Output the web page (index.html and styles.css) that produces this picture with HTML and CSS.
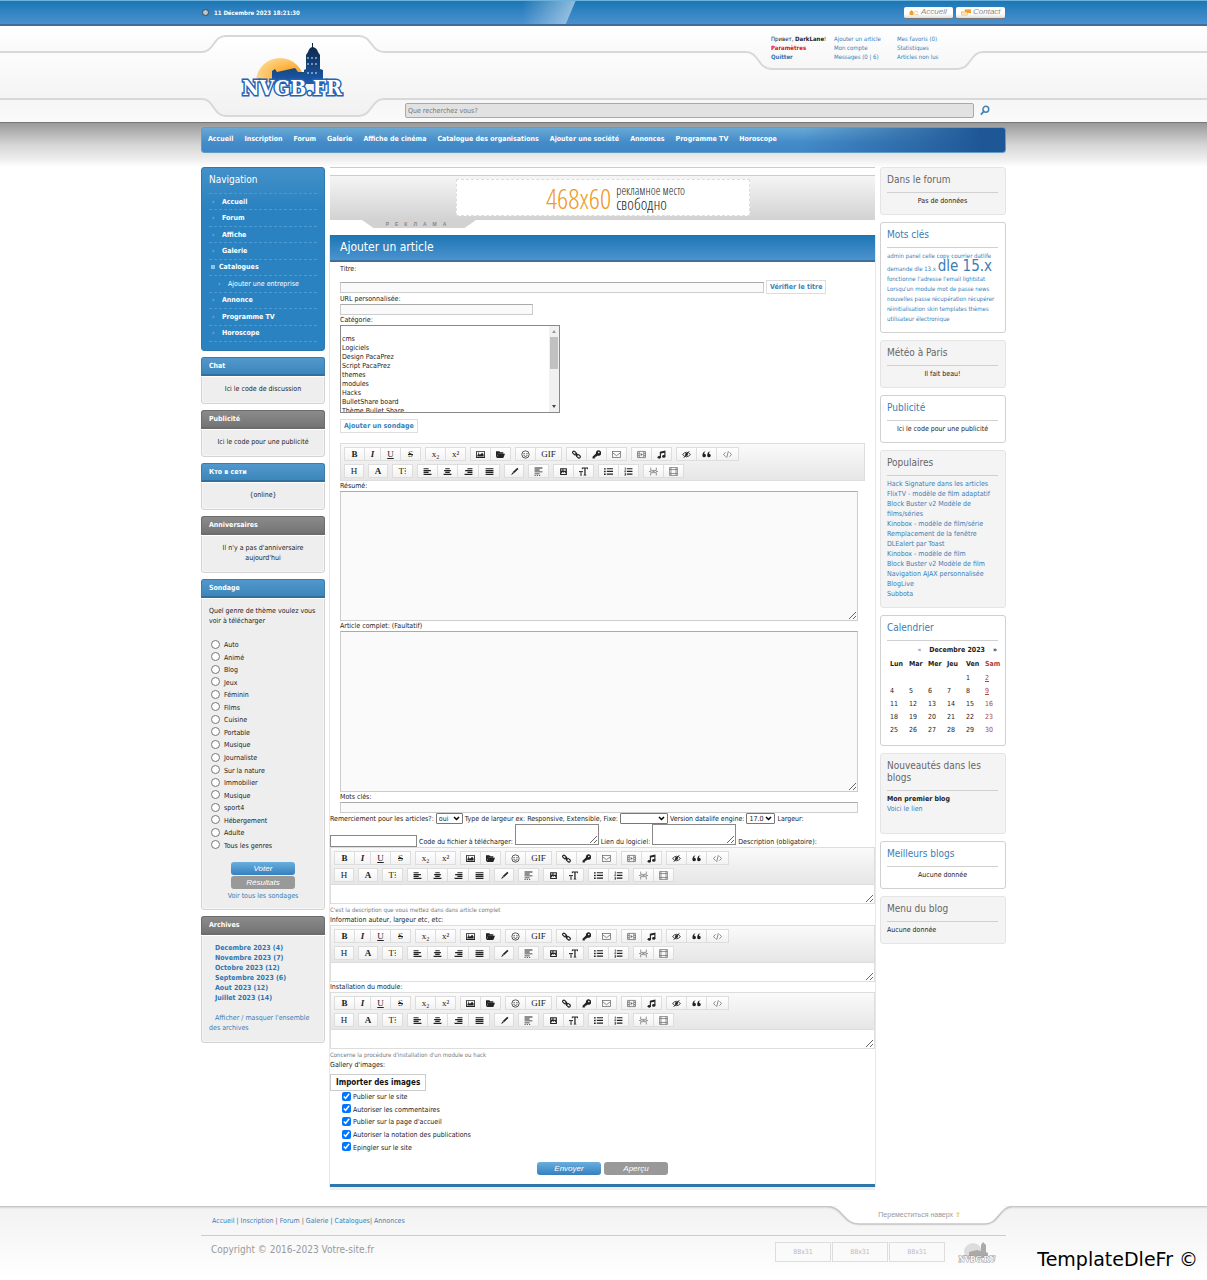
FILE: index.html
```html
<!DOCTYPE html>
<html lang="fr">
<head>
<meta charset="utf-8">
<meta name="viewport" content="width=device-width, initial-scale=1">
<title>Ajouter un article</title>
<link rel="stylesheet" href="styles.css">
</head>
<body>
<svg class="sprite" aria-hidden="true">
  <symbol id="i-image" viewBox="0 0 16 16"><path fill-rule="evenodd" d="M0 2h16v12H0zM1.500 3.500v9h13v-9z"/><path d="M2.500 11.500V9l2.500-2.500 2 2L11 5l2.500 3v3.500z"/><circle cx="4.500" cy="5.500" r="1.200"/></symbol>
  <symbol id="i-folder" viewBox="0 0 16 16"><path d="M0 13V2h6l1.500 2H13v2.500H4L1 13z"/><path d="M1 14l3-7.500h12L13 14z"/></symbol>
  <symbol id="i-smile" viewBox="0 0 16 16"><circle cx="8" cy="8" r="6.500" fill="none" stroke="currentColor" stroke-width="1.300"/><circle cx="5.500" cy="6.500" r="1"/><circle cx="10.500" cy="6.500" r="1"/><path d="M4.500 9.500q3.500 4 7 0" fill="none" stroke="currentColor" stroke-width="1.300"/></symbol>
  <symbol id="i-link" viewBox="0 0 16 16"><g fill="none" stroke="currentColor" stroke-width="2"><rect x="1" y="3" width="7.500" height="4.500" rx="2.200" transform="rotate(40 4.500 5)"/><rect x="7.500" y="8.500" width="7.500" height="4.500" rx="2.200" transform="rotate(40 11 11)"/><path d="M6 6l4 4"/></g></symbol>
  <symbol id="i-key" viewBox="0 0 16 16"><path fill-rule="evenodd" d="M10.500 0.500a5 5 0 1 1-1 9.500L8 11.500H6.500V13H5v2H1v-3l6-6a5 5 0 0 1 3.500-5.500zM12 3a1.300 1.300 0 1 0 .1 0z"/></symbol>
  <symbol id="i-mail" viewBox="0 0 16 16"><g fill="none" stroke="currentColor" stroke-width="1.300"><rect x="1" y="2.500" width="14" height="11"/><path d="M1 5l7 5 7-5"/></g></symbol>
  <symbol id="i-film" viewBox="0 0 16 16"><path d="M1 2.500h14v11H1zM4 3v10M12 3v10M1 6h3M1 10h3M12 6h3M12 10h3" fill="none" stroke="currentColor" stroke-width="1.300"/><path d="M6.500 5.500l4 2.500-4 2.500z"/></symbol>
  <symbol id="i-music" viewBox="0 0 16 16"><path d="M5 3l10-2v3.500L7 6v7H5z"/><path d="M13 4h2v7h-2z"/><ellipse cx="4" cy="13" rx="3" ry="2.400"/><ellipse cx="12" cy="11.500" rx="3" ry="2.400"/></symbol>
  <symbol id="i-eye" viewBox="0 0 16 16"><path d="M1 8q7-8 14 0-7 8-14 0z" fill="none" stroke="currentColor" stroke-width="1.500"/><circle cx="8" cy="8" r="2.500"/><path d="M3 14L13 2" stroke="currentColor" stroke-width="1.500"/></symbol>
  <symbol id="i-quote" viewBox="0 0 16 16"><path d="M7 2.500C4.500 3 4 5 4 6.500a3.200 3.200 0 1 1-3.300 3.500C.7 6 2.500 2 7 2.500zM15.500 2.500c-2.500.5-3 2.500-3 4A3.200 3.200 0 1 1 9.200 10C9.200 6 11 2 15.500 2.500z"/></symbol>
  <symbol id="i-code" viewBox="0 0 16 16"><path d="M4.500 4L1 8l3.500 4M11.500 4L15 8l-3.500 4M9.500 2l-3 12" fill="none" stroke="currentColor" stroke-width="1.300"/></symbol>
  <symbol id="i-left" viewBox="0 0 16 16"><path d="M1 2h9v2.200H1zM1 5.300h13v2.200H1zM1 8.600h9v2.200H1zM1 11.900h14v2.200H1z"/></symbol>
  <symbol id="i-center" viewBox="0 0 16 16"><path d="M4 2h8v2.200H4zM2 5.300h12v2.200H2zM4 8.600h8v2.200H4zM1 11.900h14v2.200H1z"/></symbol>
  <symbol id="i-right" viewBox="0 0 16 16"><path d="M6 2h9v2.200H6zM2 5.300h13v2.200H2zM6 8.600h9v2.200H6zM1 11.900h14v2.200H1z"/></symbol>
  <symbol id="i-justify" viewBox="0 0 16 16"><path d="M1 2h14v2.200H1zM1 5.300h14v2.200H1zM1 8.600h14v2.200H1zM1 11.900h14v2.200H1z"/></symbol>
  <symbol id="i-pen" viewBox="0 0 16 16"><path d="M13 1.500l2 2L7 11 5 9zM4.500 9.500l2 2-4.500 3z"/></symbol>
  <symbol id="i-para" viewBox="0 0 16 16"><path d="M1 1h14v1.500H1zM1 4.500h9V6H1zM1 8h14v1.500H1zM1 11.500h9V13H1zM1 14.500h2V16H1zM5 14.500h2V16H5zM9 14.500h2V16H9z"/></symbol>
  <symbol id="i-card" viewBox="0 0 16 16"><path fill-rule="evenodd" d="M2 2h12v12H2zM4 4v2.500h2V4zM8 4v2.500h4V4zM4 11v1.500h8V11L9.500 8.500 8 10 6.500 9z"/></symbol>
  <symbol id="i-size" viewBox="0 0 16 16"><path d="M5 1h11v3h-1l-.7-1.300H11.700V13.500l1.300.5v1H8.300v-1l1.200-.5V2.700H7L6 4H5zM0 7h7v2.200h-.8L5.700 8.300H4.400v5.500l.8.300V15H2v-.9l.7-.3V8.300H1.400L.9 9.200H0z"/></symbol>
  <symbol id="i-ul" viewBox="0 0 16 16"><path d="M0 2h3v2.500H0zM5 2h11v2.200H5zM0 6.800h3v2.500H0zM5 6.800h11V9H5zM0 11.500h3V14H0zM5 11.500h11v2.200H5z"/></symbol>
  <symbol id="i-ol" viewBox="0 0 16 16"><path d="M5 2h10v2.200H5zM5 6.800h10V9H5zM5 11.500h10v2.200H5zM1.500 1h1.300v4H1.500zM1 6h2.500v1H2v1h1.500v1.500H1zM1 11h2.500v4H1v-1h1.500v-.5H1v-1h1.500V12H1z"/></symbol>
  <symbol id="i-break" viewBox="0 0 16 16"><path d="M3 1v5h10V1M3 15v-5h10v5M0 8h4M6 8h4M12 8h4" fill="none" stroke="currentColor" stroke-width="1.200"/></symbol>
  <symbol id="i-page" viewBox="0 0 16 16"><path d="M1 1h14v14H1zM1 4.500h14M1 11.500h14M3.500 1v14M12.500 1v14" fill="none" stroke="currentColor" stroke-width="1.200"/></symbol>
</svg>

<div class="topbar">
  <div class="wrap topbar-in">
    <span class="clock"></span>
    <time datetime="2023-12-11T18:21:30">11 Décembre 2023 18:21:30</time>
    <svg class="shine" viewBox="0 0 60 26" aria-hidden="true"><defs><linearGradient id="sh"><stop offset="0" stop-color="#fff" stop-opacity="0"/><stop offset="1" stop-color="#fff" stop-opacity=".5"/></linearGradient></defs><path d="M0 0h60L49 26H0z" fill="url(#sh)"/></svg>
    <a class="pill" href="#"><svg viewBox="0 0 16 10" aria-hidden="true"><path d="M0 5l4-4 4 4H7v4H1V5z" fill="#f0a030"/><path d="M8 8V5l3-3 4 4M10 8.500h5" stroke="#f0b860" stroke-width="1.200" fill="none"/></svg>Accueil</a>
    <a class="pill" href="#"><svg viewBox="0 0 16 10" aria-hidden="true"><path d="M6 0h10v6H6z" fill="#f0a030"/><path d="M1 4h9v5H1z" fill="#fff" stroke="#f0a030"/><path d="M1 4l4.500 3L10 4" fill="none" stroke="#f0a030"/></svg>Contact</a>
  </div>
</div>

<header class="head">
  <svg class="frame" viewBox="0 0 2414 96" aria-hidden="true">
    <defs><linearGradient id="fg" x2="0" y2="1"><stop offset="0" stop-color="#fff"/><stop offset="1" stop-color="#f1f1f1"/></linearGradient></defs>
    <g fill="url(#fg)" stroke="#d6d8d9" stroke-width="2">
      <path d="M-5 26H805C817 26 816 10 829 10H962C975 10 974 26 987 26H1349C1362 26 1361 43 1374 43H1561C1574 43 1573 26 1586 26H2420V73H987C974 73 975 90 962 90H829C816 90 817 73 805 73H-5z"/>
    </g>
  </svg>
  <div class="wrap head-in">
    <a class="logo" href="#" aria-label="NVGB.FR">
      <svg viewBox="0 0 104 60" width="104" height="60">
        <defs><radialGradient id="sun" cx=".8" cy=".7" r=".8"><stop offset="0" stop-color="#ff9800"/><stop offset="1" stop-color="#fcd48a"/></radialGradient><linearGradient id="twr" x2="0" y2="1"><stop offset="0" stop-color="#0b2440"/><stop offset="1" stop-color="#1d5cb0"/></linearGradient></defs>
        <path d="M16 40a24 24 0 1 1 48 0z" fill="url(#sun)"/>
        <path d="M32 42V29l3-2 2 3 18-4 3 4h6V28l2-1V13l2-3q1-4 4-5V1h1v4q4 1 5 5l2 3v14l3 1v14z" fill="url(#twr)"/>
        <path d="M68 15v2m4-2v2m4-2v2M68 21v2m4-2v2m4-2v2M68 30v2m4-2v2m4-2v2" stroke="#d8e6f5"/>
        <text x="52" y="53" text-anchor="middle" class="logo-text">NVGB.FR</text>
      </svg>
    </a>
    <div class="head-main">
      <nav class="user" aria-label="Compte">
        <span class="hello">Привет, <b>DarkLane</b>!</span><a href="#">Ajouter un article</a><a href="#">Mes favoris (0)</a>
        <a class="red" href="#">Paramètres</a><a href="#">Mon compte</a><a href="#">Statistiques</a>
        <a class="strong" href="#">Quitter</a><a href="#">Messages (0 | 6)</a><a href="#">Articles non lus</a>
      </nav>
      <form class="search">
        <input type="text" aria-label="Recherche" placeholder="Que recherchez vous?">
        <button type="button" aria-label="Rechercher"><svg viewBox="0 0 12 12" aria-hidden="true"><circle cx="7" cy="4.500" r="3.500" fill="none" stroke="#3f83bd" stroke-width="1.800"/><path d="M4.500 7L1 11" stroke="#3f83bd" stroke-width="2"/></svg></button>
      </form>
    </div>
  </div>
</header>

<div class="menuband">
  <nav class="wrap menu" aria-label="Menu principal">
    <a href="#">Accueil</a><a href="#">Inscription</a><a href="#">Forum</a><a href="#">Galerie</a><a href="#">Affiche de cinéma</a><a href="#">Catalogue des organisations</a><a href="#">Ajouter une société</a><a href="#">Annonces</a><a href="#">Programme TV</a><a href="#">Horoscope</a>
  </nav>
</div>

<div class="wrap columns">
  <aside class="left">
    <nav class="sidenav" aria-label="Navigation">
      <h2>Navigation</h2>
      <ul>
        <li><a href="#">Accueil</a></li><li><a href="#">Forum</a></li><li><a href="#">Affiche</a></li><li><a href="#">Galerie</a></li>
        <li class="open"><a href="#">Catalogues</a></li><li class="sub"><a href="#">Ajouter une entreprise</a></li>
        <li><a href="#">Annonce</a></li><li><a href="#">Programme TV</a></li><li><a href="#">Horoscope</a></li>
      </ul>
    </nav>
    <section class="block"><h3>Chat</h3><p>Ici le code de discussion</p></section>
    <section class="block grey"><h3>Publicité</h3><p>Ici le code pour une publicité</p></section>
    <section class="block"><h3>Кто в сети</h3><p>{online}</p></section>
    <section class="block grey"><h3>Anniversaires</h3><p>Il n'y a pas d'anniversaire aujourd'hui</p></section>
    <section class="block"><h3>Sondage</h3>
      <form class="poll">
        <div class="question">Quel genre de thème voulez vous voir à télécharger</div>
        <div class="choices">
          <label><input type="radio" name="v">Auto</label><label><input type="radio" name="v">Animé</label><label><input type="radio" name="v">Blog</label><label><input type="radio" name="v">Jeux</label><label><input type="radio" name="v">Féminin</label><label><input type="radio" name="v">Films</label><label><input type="radio" name="v">Cuisine</label><label><input type="radio" name="v">Portable</label><label><input type="radio" name="v">Musique</label><label><input type="radio" name="v">Journaliste</label><label><input type="radio" name="v">Sur la nature</label><label><input type="radio" name="v">Immobilier</label><label><input type="radio" name="v">Musique</label><label><input type="radio" name="v">sport4</label><label><input type="radio" name="v">Hébergement</label><label><input type="radio" name="v">Adulte</label><label><input type="radio" name="v">Tous les genres</label>
        </div>
        <div class="poll-actions"><button class="btn" type="button">Voter</button><button class="btn dull" type="button">Résultats</button><a href="#">Voir tous les sondages</a></div>
      </form>
    </section>
    <section class="block grey"><h3>Archives</h3>
      <div class="archive">
        <a href="#">Decembre 2023 (4)</a><a href="#">Novembre 2023 (7)</a><a href="#">Octobre 2023 (12)</a><a href="#">Septembre 2023 (6)</a><a href="#">Aout 2023 (12)</a><a href="#">Juillet 2023 (14)</a>
        <a class="all" href="#">Afficher / masquer l'ensemble des archives</a>
      </div>
    </section>
  </aside>

  <main>
    <div class="promo">
      <div class="promo-band"><a class="ad" href="#"><span class="ad-size">468x60</span><span class="ad-text"><span>рекламное место</span><span class="ad-free">свободно</span></span></a></div>
      <div class="promo-tab"><span>РЕКЛАМА</span></div>
    </div>
    <form class="article">
      <h1>Ajouter un article</h1>
      <div class="inset">
        <label for="titre">Titre:</label>
        <div class="row title-row"><input class="field" id="titre" type="text"><button class="mini" type="button">Vérifier le titre</button></div>
        <label for="url">URL personnalisée:</label>
        <input class="field url" id="url" type="text">
        <label for="cat">Catégorie:</label>
        <div class="cat-box">
          <select id="cat" class="cat" multiple><option></option><option>cms</option><option>Logiciels</option><option>Design PacaPrez</option><option>Script PacaPrez</option><option>themes</option><option>modules</option><option>Hacks</option><option>BulletShare board</option><option>Thème Bullet Share</option></select>
          <svg class="cat-bar" viewBox="0 0 10 86" aria-hidden="true"><path d="M0 0h10v86H0z" fill="#f1f1f1"/><path d="M1 11h8v32H1z" fill="#c1c1c1"/><path d="M3 7l2-3 2 3z" fill="#999"/><path d="M3 79l2 3 2-3z" fill="#444"/></svg>
        </div>
        <button class="mini poll-add" type="button">Ajouter un sondage</button>
        <div class="toolbar"></div>
        <label for="resume">Résumé:</label>
        <textarea class="field resume" id="resume"></textarea>
        <label for="complet">Article complet: (Faultatif)</label>
        <textarea class="field complet" id="complet"></textarea>
        <label for="mots">Mots clés:</label>
        <input class="field words" id="mots" type="text">
      </div>
      <div class="line"><label for="merci">Remerciement pour les articles?:</label><select id="merci" class="w-yes"><option>oui</option></select><label for="type">Type de largeur ex: Responsive, Extensible, Fixe:</label><select id="type" class="w-type"><option></option></select><label for="ver">Version datalife engine:</label><select id="ver" class="w-ver"><option>17.0</option></select><label for="larg">Largeur:</label></div>
      <div class="line low"><input id="larg" type="text"><label for="code">Code du fichier à télécharger:</label><textarea id="code"></textarea><label for="lien">Lien du logiciel:</label><textarea id="lien"></textarea><label for="desc">Description (obligatoire):</label></div>
      <div class="toolbar"></div><textarea class="short" id="desc"></textarea>
      <small>C'est la description que vous mettez dans dans article complet</small>
      <label for="info">Information auteur, largeur etc, etc:</label>
      <div class="toolbar"></div><textarea class="short" id="info"></textarea>
      <label for="inst">Installation du module:</label>
      <div class="toolbar"></div><textarea class="short" id="inst"></textarea>
      <small>Concerne la procédure d'installation d'un module ou hack</small>
      <span class="text">Gallery d'images:</span>
      <button class="import" type="button">Importer des images</button>
      <div class="checks">
        <label><input type="checkbox" checked>Publier sur le site</label><label><input type="checkbox" checked>Autoriser les commentaires</label><label><input type="checkbox" checked>Publier sur la page d'accueil</label><label><input type="checkbox" checked>Autoriser la notation des publications</label><label><input type="checkbox" checked>Epingler sur le site</label>
      </div>
      <div class="submit"><button class="btn" type="button">Envoyer</button><button class="btn dull" type="button">Aperçu</button></div>
    </form>
  </main>

  <aside class="right">
    <section class="card tint"><h2>Dans le forum</h2><p>Pas de données</p></section>
    <section class="card"><h2>Mots clés</h2><div class="tags"><a href="#">admin panel</a> <a href="#">celle</a> <a href="#">copy</a> <a href="#">courrier</a> <a href="#">datlife</a> <br><a href="#">demande</a> <a href="#">dle 13.x</a> <a class="big" href="#">dle 15.x</a> <br><a href="#">fonctionne</a> <a href="#">l'adresse</a> <a href="#">l'email</a> <a href="#">lightstat</a> <br><a href="#">Lorsqu'un</a> <a href="#">module</a> <a href="#">mot de passe</a> <a href="#">news</a> <br><a href="#">nouvelles</a> <a href="#">passe</a> <a href="#">récupération</a> <a href="#">récupérer</a> <br><a href="#">réinitialisation</a> <a href="#">skin</a> <a href="#">templates</a> <a href="#">thèmes</a> <br><a href="#">utilisateur</a> <a href="#">électronique</a></div></section>
    <section class="card tint"><h2>Météo à Paris</h2><p>Il fait beau!</p></section>
    <section class="card"><h2>Publicité</h2><p>Ici le code pour une publicité</p></section>
    <section class="card tint"><h2>Populaires</h2><div class="list"><a href="#">Hack Signature dans les articles</a><a href="#">FlixTV - modèle de film adaptatif</a><a href="#">Block Buster v2 Modèle de films/séries</a><a href="#">Kinobox - modèle de film/série</a><a href="#">Remplacement de la fenêtre</a><a href="#">DLEalert par Toast</a><a href="#">Kinobox - modèle de film</a><a href="#">Block Buster v2 Modèle de film</a><a href="#">Navigation AJAX personnalisée</a><a href="#">BlogLive</a><a href="#">Subbota</a></div></section>
    <section class="card"><h2>Calendrier</h2>
      <table class="cal">
        <caption><a href="#">«</a><b>Decembre 2023</b><b>»</b></caption>
        <thead><tr><th>Lun</th><th>Mar</th><th>Mer</th><th>Jeu</th><th>Ven</th><th>Sam</th></tr></thead>
        <tbody>
          <tr><td></td><td></td><td></td><td></td><td>1</td><td><a href="#">2</a></td></tr>
          <tr><td>4</td><td>5</td><td>6</td><td>7</td><td>8</td><td><a href="#">9</a></td></tr>
          <tr><td>11</td><td>12</td><td>13</td><td>14</td><td>15</td><td>16</td></tr>
          <tr><td>18</td><td>19</td><td>20</td><td>21</td><td>22</td><td>23</td></tr>
          <tr><td>25</td><td>26</td><td>27</td><td>28</td><td>29</td><td>30</td></tr>
        </tbody>
      </table>
    </section>
    <section class="card tint blogs"><h2>Nouveautés dans les blogs</h2><div class="list"><b>Mon premier blog</b><a href="#">Voici le lien</a></div></section>
    <section class="card"><h2>Meilleurs blogs</h2><p>Aucune donnée</p></section>
    <section class="card tint"><h2>Menu du blog</h2><div class="list">Aucune donnée</div></section>
  </aside>
</div>

<footer class="foot">
  <svg class="foot-frame" viewBox="0 0 2414 20" aria-hidden="true"><path d="M0 0H1430C1446 0 1446 17 1462 17H1588C1602 17 1602 0 1616 0H2414" fill="#fff" stroke="#e6e6e6" stroke-width="5"/><path d="M0 0.500H1430C1446 0.500 1446 18 1462 18H1588C1602 18 1602 0.500 1616 0.500H2414" fill="#fff" stroke="#c6c6c6" stroke-width="1.500"/></svg>
  <div class="wrap">
    <div class="foot-top">
      <nav aria-label="Pied de page"><a href="#">Accueil</a> | <a href="#">Inscription</a> | <a href="#">Forum</a> | <a href="#">Galerie</a> | <a href="#">Catalogues</a>| <a href="#">Annonces</a></nav>
      <a class="up" href="#">Переместиться наверх <i>⇧</i></a>
    </div>
    <div class="foot-low">
      <span class="copy">Copyright © 2016-2023 Votre-site.fr</span>
      <span class="count">88x31</span><span class="count">88x31</span><span class="count">88x31</span>
      <svg class="mark" viewBox="0 0 38 22" aria-hidden="true"><circle cx="15" cy="10" r="9" fill="#ddd"/><path d="M11 15V10l8-2 4 1V3l2-3 3 3v7l2 1v5H11z" fill="#aaa"/><text x="19" y="20" text-anchor="middle" class="mark-text">NVBG.RU</text></svg>
    </div>
  </div>
  <div class="stamp">TemplateDleFr ©</div>
</footer>

<template id="editor-tools">
  <div class="tools">
    <div class="group"><button type="button"><b>B</b></button><button type="button" class="n16"><b><i>I</i></b></button><button type="button"><u>U</u></button><button type="button"><s>S</s></button></div>
    <div class="group"><button type="button">x₂</button><button type="button">x²</button></div>
    <div class="group"><button type="button" data-icon="image"></button><button type="button" data-icon="folder"></button></div>
    <div class="group"><button type="button" data-icon="smile"></button><button type="button" class="n26">GIF</button></div>
    <div class="group"><button type="button" data-icon="link"></button><button type="button" data-icon="key"></button><button type="button" class="soft" data-icon="mail"></button></div>
    <div class="group"><button type="button" class="soft" data-icon="film"></button><button type="button" data-icon="music"></button></div>
    <div class="group"><button type="button" data-icon="eye"></button><button type="button" data-icon="quote"></button><button type="button" class="n22 soft" data-icon="code"></button></div>
  </div>
  <div class="tools">
    <div class="group"><button type="button">H</button></div>
    <div class="group"><button type="button"><b>A</b></button></div>
    <div class="group"><button type="button" class="n19">T⁞</button></div>
    <div class="group"><button type="button" data-icon="left"></button><button type="button" data-icon="center"></button><button type="button" class="n21" data-icon="right"></button><button type="button" class="n21" data-icon="justify"></button></div>
    <div class="group"><button type="button" data-icon="pen"></button></div>
    <div class="group"><button type="button" class="n19" data-icon="para"></button></div>
    <div class="group"><button type="button" data-icon="card"></button><button type="button" data-icon="size"></button></div>
    <div class="group"><button type="button" data-icon="ul"></button><button type="button" data-icon="ol"></button></div>
    <div class="group"><button type="button" class="soft" data-icon="break"></button><button type="button" class="soft" data-icon="page"></button></div>
  </div>
</template>
<script src="script.js"></script>
</body>
</html>
```

FILE: styles.css
```css
* { box-sizing: border-box; }
body { margin: 0; background: #fff; color: #222; font: 7px/10px "DejaVu Sans Condensed", "Noto Sans", sans-serif; }
a { color: #3b7db5; text-decoration: none; }
h1, h2, h3, p, ul { margin: 0; padding: 0; font-weight: normal; }
ul { list-style: none; }
input, select, textarea, button { font: inherit; color: inherit; margin: 0; padding: 0; }
.sprite { display: none; }
.wrap { width: 100%; max-width: 805px; margin: 0 auto; }

/* top bar */
.topbar { background: linear-gradient(#1c77b5, #4a91cf); border-top: 1px solid #6db2dc; border-bottom: 2px solid #426d9a; }
.topbar-in { display: flex; align-items: center; height: 23px; padding-right: 1px; gap: 3px; color: #fff; font-weight: bold; position: relative; }
.topbar-in time { margin: 0 auto 0 2px; font-size: 6px; }
.clock { width: 7px; height: 7px; margin-left: 1px; border: 1px solid #444; border-radius: 50%; background: #b8c6cf; }
.shine { position: absolute; left: 318px; top: 0; width: 60px; height: 23px; }
.pill { display: flex; align-items: center; gap: 2px; height: 12px; width: 49px; padding-left: 5px; border-radius: 2px; background: linear-gradient(#fff 60%, #ddd); border-bottom: 1px solid #777; color: #8a8a8a; font: italic 8px/12px "Liberation Sans", sans-serif; }
.pill svg { width: 10px; height: 7px; }

/* header */
.head { position: relative; overflow: hidden; background: linear-gradient(#fff, #f3f3f3 60%, #fafafa); }
.frame { position: absolute; left: 50%; top: 0; width: 2414px; height: 96px; margin-left: -1207px; }
.head-in { position: relative; display: flex; height: 96px; }
.logo { flex: none; width: 204px; padding: 16px 0 0 39px; }
.logo-text { font: bold 21px "DejaVu Serif Condensed", "DejaVu Serif", serif; fill: #fff; stroke: #2263b5; stroke-width: 3px; paint-order: stroke; }
.head-main { flex: 1; display: flex; flex-direction: column; justify-content: space-between; }
.user { display: grid; grid-template-columns: 63px 63px 1fr; margin-left: 366px; padding-top: 8px; font-size: 6px; line-height: 9px; white-space: nowrap; }
.user .red { color: #e01010; font-weight: bold; }
.user .strong { color: #2b74b5; font-weight: bold; }
.search { display: flex; align-items: center; gap: 6px; padding-bottom: 4px; }
.search input { width: 569px; height: 15px; padding: 0 2px; border: 1px solid #a9a9a9; border-radius: 2px; background: #e2e2e2; }
.search input::placeholder { color: #777; }
.search button { width: 10px; height: 12px; border: 0; background: none; }
.search svg { display: block; width: 10px; height: 11px; }

/* main menu */
.menuband { padding: 4px 0 14px; border-top: 1px solid #777; background: linear-gradient(#999, #d6d6d6 50%, #ececec 80%, #fff); }
.menu { display: flex; gap: 11px; height: 26px; padding: 0 6px; line-height: 23px; border: 1px solid #5f9cc9; border-radius: 3px; background: linear-gradient(90deg, transparent 75%, #1f5796 97%), linear-gradient(#68a8d4, #448bc9 60%, #3f86c5); white-space: nowrap; }
.menu a { color: #fff; font-weight: bold; }

.columns { display: grid; grid-template-columns: 124px minmax(0, 1fr) 126px; column-gap: 5px; align-items: start; }
.left, .right { display: flex; flex-direction: column; }
.left { gap: 6px; }
.right { gap: 7px; }

/* left column */
.sidenav { height: 184px; padding: 6px 7px; border-radius: 3px; background: linear-gradient(#4390c8, #2a82c0 40px); border: 1px solid #2b79b2; color: #fff; }
.sidenav h2 { font-size: 10px; line-height: 12px; padding: 0 0 7px; border-bottom: 1px dashed #4c9ad2; }
.sidenav ul { display: grid; grid-auto-rows: 1fr; height: 148px; }
.sidenav li { display: flex; align-items: center; border-bottom: 1px dashed #4c9ad2; }
.sidenav li::before { content: "›"; width: 10px; padding-left: 3px; color: #9ccbee; }
.sidenav .open::before { content: ""; width: 4px; height: 4px; margin: 0 4px 0 2px; padding: 0; background: #8cc4ea; }
.sidenav .sub { padding-left: 6px; }
.sidenav a { color: #fff; font-weight: bold; }
.sidenav .sub a { font-weight: normal; }
.block { border: 1px solid #d3d3d3; border-radius: 3px; background: #eee; box-shadow: inset 0 0 0 1px #f5f5f5; }
.block h3 { margin: -1px; padding: 0 7px; height: 19px; font-size: 7px; line-height: 16px; color: #fff; font-weight: bold; border: 1px solid #3b7cab; border-bottom: 2px solid #336f9c; border-radius: 3px 3px 0 0; background: linear-gradient(#5298cc, #3c86bb); box-shadow: 0 1px #fff; }
.block.grey h3 { background: linear-gradient(#8b8b8b, #747474); border-color: #6c6c6c; }
.block p { padding: 9px 12px; text-align: center; }
.poll { padding: 9px 7px 8px; }
.choices { display: grid; grid-auto-rows: 1fr; height: 213px; margin-top: 13px; }
.choices label { display: flex; align-items: center; gap: 4px; }
.choices input { width: 9px; height: 9px; margin: 0 0 2px 2px; }
.poll-actions { display: flex; flex-direction: column; align-items: center; gap: 1px; padding-top: 10px; }
.poll-actions a { padding-top: 1px; }
.btn { width: 64px; height: 13px; border: 0; border-radius: 3px; color: #fff; background: linear-gradient(#6aaede, #3580bf); font: italic 8px/12px "Liberation Sans", sans-serif; }
.btn.dull { background: #999; }
.archive { display: flex; flex-direction: column; padding: 9px 7px; }
.archive a { padding-left: 6px; font-weight: bold; color: #2f76b0; }
.archive .all { padding: 0; margin-top: 10px; font-weight: normal; text-indent: 6px; color: #3b7db5; }

/* ad banner */
.promo { border-top: 1px solid #ccc; padding-top: 7px; }
.promo-band { display: flex; justify-content: center; padding: 3px 0 4px; border-top: 1px solid #ccc; background: linear-gradient(#f5f5f5, #d2d2d2); }
.ad { display: flex; align-items: center; justify-content: center; gap: 5px; width: 294px; height: 37px; padding-left: 26px; border: 1px dashed #ddd; background: #fff; font-family: "Open Sans Condensed Light", "Liberation Sans Narrow", "Open Sans Condensed", Roboto, sans-serif; font-weight: 300; color: #222; }
.ad-size { color: #f09a1f; font-size: 28px; line-height: 32px; }
.ad-text { display: flex; flex-direction: column; font-size: 12px; line-height: 13px; }
.ad-free { font-size: 16px; line-height: 14px; }
.promo-tab { width: 114px; height: 8px; margin-left: 32px; background: #d2d2d2; clip-path: polygon(0 0, 100% 0, 90% 100%, 10% 100%); text-align: center; font: bold 5px/8px "Liberation Sans", sans-serif; color: #888; }
.promo-tab span { letter-spacing: 6px; }

/* article form */
.article { margin-top: 7px; padding-bottom: 9px; border-bottom: 3px solid #2f76ab; box-shadow: 1px 0 #e8e8e8, -1px 0 #e8e8e8, 0 3px #eee; }
.article h1 { height: 27px; padding-left: 10px; font-size: 12px; line-height: 25px; color: #fff; background: linear-gradient(#1c76b3, #4c93cf); border-bottom: 2px solid #3d6f9f; }
.article label, .article small, .text { display: block; line-height: 10px; }
.article small { font-size: 6px; color: #777; padding-top: 1px; }
.inset { padding: 2px 10px 0; }
.field { display: block; width: 518px; max-width: 100%; border: 1px solid #ccc; border-top-color: #aaa; background: #fafafa; }
.row { display: flex; align-items: center; }
.title-row { gap: 2px; margin-top: 6px; height: 14px; }
.title-row .field { width: 424px; }
input.field { height: 11px; }
.url { width: 193px; }
.mini { height: 14px; padding: 0 3px; border: 1px solid #ddd; background: #fff; color: #3b7fb8; font-weight: bold; }
.cat-box { position: relative; width: 220px; }
.cat { display: block; width: 100%; height: 88px; padding: 0; border: 1px solid #888; border-radius: 0; background: #fff; overflow: hidden; }
.cat option { min-height: 9px; height: 9px; line-height: 9px; padding: 0 1px; }
.cat-bar { position: absolute; top: 1px; right: 1px; width: 10px; height: 86px; }
.poll-add { display: block; margin: 6px 0 10px; }
.resume { height: 130px; }
.complet { height: 161px; }
.line { display: flex; align-items: center; gap: 2px; height: 11px; white-space: nowrap; }
.line select { height: 11px; padding-left: 2px; border: 1px solid #777; border-radius: 1px; appearance: none; background: #fff url("data:image/svg+xml,%3Csvg xmlns='http://www.w3.org/2000/svg' width='7' height='5'%3E%3Cpath d='M1 1l2.500 2.500L6 1' fill='none' stroke='%23000' stroke-width='1.500'/%3E%3C/svg%3E") no-repeat right 2px center; }
.w-yes { width: 27px; }
.w-type { width: 48px; }
.w-ver { width: 29px; }
.line.low { height: 23px; align-items: flex-end; }
.line input { width: 87px; height: 12px; border: 1px solid #888; }
.line textarea { width: 84px; height: 21px; margin-bottom: 2px; border: 1px solid #888; }
.toolbar { padding: 3px 3px 1px; border: 1px solid #ddd; background: linear-gradient(#fafafa, #e6e6e6); }
.tools { display: flex; gap: 4px; height: 15px; }
.tools + .tools { margin-top: 2px; }
.group { display: flex; border: 1px solid #ddd; background: linear-gradient(#fff, #f2f2f2); margin-bottom: 1px; }
.group button { width: 20px; border: 0; border-left: 1px solid #ddd; background: none; display: flex; align-items: center; justify-content: center; font: 9px/12px "Liberation Serif", serif; color: #222; }
.group button:first-child { border-left: 0; width: 19px; }
.group button:only-child { width: 18px; }
.group button.n16 { width: 16px; }
.group button.n19 { width: 19px; }
.group button.n21 { width: 21px; }
.group button.n22 { width: 22px; }
.group button.n26 { width: 26px; }
.group svg { width: 9px; height: 9px; fill: currentColor; }
.group .soft { color: #666; }
.short { display: block; width: 100%; height: 19px; border: 1px solid #ddd; border-top: 0; }
.import { height: 17px; margin-top: 4px; padding: 0 5px; border: 1px solid #ccc; background: #fff; font-size: 8px; font-weight: bold; color: #111; display: block; }
.checks { display: grid; grid-auto-rows: 1fr; height: 63px; margin: 0 0 8px 12px; }
.article .checks label { display: flex; align-items: center; gap: 2px; }
.checks input { width: 9px; height: 9px; margin-bottom: 2px; }
.submit { display: flex; justify-content: center; gap: 3px; }

/* right column */
.card { padding: 6px 7px 6px 6px; border: 1px solid #d0d0d0; border-radius: 3px; }
.card.tint { background: #f4f4f4; border-color: #e4e4e4; }
.card h2 { font-size: 10px; line-height: 12px; color: #3b7db5; padding-bottom: 6px; margin-bottom: 3px; border-bottom: 1px solid #d0d0d0; }
.card.tint h2 { color: #666; }
.card p { text-align: center; }
.card p, .list, .tags { padding-bottom: 2px; }
.list a, .list b { display: block; }
.tags { font-size: 6px; white-space: nowrap; }
.tags .big { font-size: 15px; line-height: 10px; }
.blogs .list { padding-bottom: 13px; }
.cal { width: 114px; table-layout: fixed; border-collapse: collapse; font-size: 7px; line-height: 13px; margin-bottom: 2px; }
.cal caption { text-align: right; padding-right: 4px; line-height: 13px; height: 13px; }
.cal caption b { margin-left: 8px; }
.cal th, .cal td { padding: 0 0 0 3px; text-align: left; height: 13px; }
.cal th { height: 15px; }
.cal th:last-child, .cal td:last-child, .cal td a { color: #b04040; }
.cal td a { text-decoration: underline; }

/* footer */
.foot { position: relative; margin-top: 19px; overflow: hidden; background: linear-gradient(#f2f2f2, #fff); }
.foot-frame { position: absolute; left: 50%; top: 0; width: 2414px; height: 20px; margin-left: -1207px; }
.foot .wrap { position: relative; }
.foot-top { display: flex; justify-content: space-between; height: 30px; padding: 4px 45px 0 11px; border-bottom: 1px solid #ccc; }
.foot-top nav { padding-top: 6px; color: #666; }
.up { color: #999; font-family: "Liberation Sans", sans-serif; }
.up i { color: #e0a800; font-style: normal; }
.foot-low { display: flex; gap: 1px; height: 43px; padding: 6px 10px 0; }
.copy { flex: 1; font-size: 10px; line-height: 16px; color: #999; }
.count { width: 56px; height: 20px; line-height: 18px; border: 1px solid #ddd; background: #fafafa; text-align: center; color: #bbb; }
.mark { width: 38px; height: 22px; margin-left: 12px; }
.mark-text { font: bold 8px "Liberation Serif", serif; fill: #fff; stroke: #999; stroke-width: 1px; paint-order: stroke; }
.stamp { position: absolute; right: 9px; bottom: 9px; font: 19px/22px "DejaVu Sans", sans-serif; color: #000; }
```

FILE: script.js
```javascript
// Fills every editor toolbar with the same set of buttons.
const source = document.getElementById("editor-tools");
document.querySelectorAll(".toolbar").forEach((bar) => {
  const tools = source.content.cloneNode(true);
  tools.querySelectorAll("[data-icon]").forEach((button) => {
    button.setAttribute("aria-label", button.dataset.icon);
    button.innerHTML = `<svg aria-hidden="true"><use href="#i-${button.dataset.icon}"/></svg>`;
  });
  bar.append(tools);
});
```
